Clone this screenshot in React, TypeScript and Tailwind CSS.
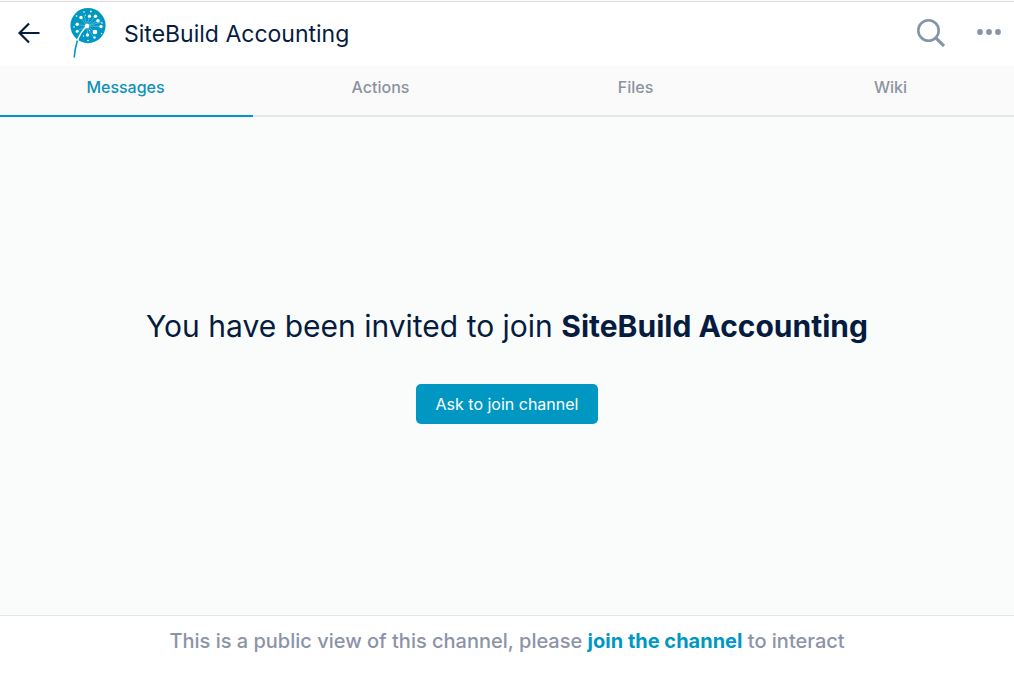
import { useState } from "react";

const tabs = ["Messages", "Actions", "Files", "Wiki"];

function DandelionLogo() {
  return (
    <svg viewBox="0 0 36 50" className="h-[50px] w-9 shrink-0" role="img" aria-label="SiteBuild">
      <circle cx="18" cy="17.6" r="17.6" fill="#0098c3" />
      <path
        d="M17 18L11 9.500M17 18L19.500 8M17 18L25.500 8M17 18L28 12.500M17 18L31 18.500M17 18L25 24M17 18L17.500 27M17 18L7 23M17 18L7 16.500M17 18L14 7M17 18L32 14M17 18L24 30"
        stroke="#8fd0e4"
        strokeWidth=".5"
      />
      <path d="M17 18C12 22.500 8.300 29 6.600 35" fill="none" stroke="#fff" strokeWidth="1.500" />
      <path d="M7.400 32.500C5.700 38 4.600 43 4.200 49.500" fill="none" stroke="#0098c3" strokeWidth="1.600" />
      <g fill="#fff">
        <circle cx="17" cy="18" r="2.300" />
        <circle cx="11" cy="9.500" r="1.700" />
        <circle cx="19.500" cy="8.200" r="1.600" />
        <circle cx="25.500" cy="8.200" r="1.700" />
        <circle cx="28" cy="12.800" r="1.800" />
        <circle cx="31" cy="18.500" r="1.700" />
        <circle cx="25" cy="24" r="2.300" />
        <circle cx="17.500" cy="27" r="1.700" />
        <circle cx="7.200" cy="23.200" r="1.500" />
        <circle cx="7.200" cy="16.300" r="1.700" />
        <circle cx="24.500" cy="29.500" r="1.200" />
        <circle cx="6.500" cy="8" r=".8" />
        <circle cx="14" cy="4" r=".8" />
        <circle cx="20.800" cy="3.500" r=".9" />
        <circle cx="15.500" cy="7" r=".6" />
        <circle cx="4" cy="19" r=".8" />
        <circle cx="32" cy="15" r=".8" />
        <circle cx="31.500" cy="25.500" r=".8" />
        <circle cx="19.500" cy="22.500" r=".6" />
        <circle cx="13.500" cy="28" r=".7" />
        <circle cx="18" cy="32.500" r=".8" />
      </g>
    </svg>
  );
}

export default function App() {
  const [active, setActive] = useState("Messages");

  return (
    <div className="flex min-h-screen flex-col overflow-hidden bg-[#fafafa] pt-px font-['Inter',sans-serif] text-[#061c3f]">
      <header className="flex h-[65px] items-center border-t border-[#dedede] bg-white pr-[13px] pb-0.5 pl-[18px]">
        <button type="button" aria-label="Back" className="shrink-0">
          <svg viewBox="0 0 22 22" className="size-[22px]" fill="none" stroke="currentColor" strokeWidth="2.200">
            <path d="M21.500 11H1.500M11 1.500L1.500 11L11 20.500" />
          </svg>
        </button>
        <div className="ml-[30px] flex min-w-0 flex-1 items-center gap-[18px]">
          <DandelionLogo />
          <h1 className="truncate pt-0.5 text-[23px] leading-8">SiteBuild Accounting</h1>
        </div>
        <div className="flex shrink-0 items-center gap-8 text-[#8694aa]">
          <button type="button" aria-label="Search">
            <svg viewBox="0 0 28 28" className="size-7" fill="none" stroke="currentColor">
              <circle cx="11.500" cy="11.500" r="10.200" strokeWidth="2.600" />
              <path d="M18.800 18.800L27 27" strokeWidth="3.200" />
            </svg>
          </button>
          <button type="button" aria-label="More options" className="pb-0.5">
            <svg viewBox="0 0 24 6" className="h-1.5 w-6" fill="currentColor">
              <circle cx="3" cy="3" r="2.900" />
              <circle cx="12" cy="3" r="2.900" />
              <circle cx="21" cy="3" r="2.900" />
            </svg>
          </button>
        </div>
      </header>

      <nav className="-mr-1 grid grid-cols-4 gap-0.5 border-b-2 border-[#e5e5e5] bg-[#fafafa]">
        {tabs.map((tab) => (
          <button
            key={tab}
            type="button"
            onClick={() => setActive(tab)}
            aria-current={tab === active ? "page" : undefined}
            className={
              tab === active
                ? "-mb-0.5 h-[51px] border-b-2 border-[#0098c3] pr-0.5 pb-2 text-base font-medium text-[#0f92b8]"
                : "-mb-0.5 h-[51px] border-b-2 border-transparent pr-0.5 pb-2 text-base font-medium text-[#8c93a0]"
            }
          >
            {tab}
          </button>
        ))}
      </nav>

      <main className="flex flex-1 flex-col items-center justify-center gap-10 bg-[#fafcfb] px-4 text-center">
        <h2 className="text-3xl">
          You have been invited to join <strong className="font-bold">SiteBuild Accounting</strong>
        </h2>
        <button type="button" className="h-10 rounded-[5px] bg-[#0098c3] px-5 text-base text-white">
          Ask to join channel
        </button>
      </main>

      <footer className="flex h-[68px] justify-center border-t border-[#e2e6e5] bg-white px-4 pt-[11px] text-center text-xl font-medium text-[#8c93a8]">
        <p>
          This is a public view of this channel, please{" "}
          <a href="#join" className="font-bold text-[#0098c3]">
            join the channel
          </a>{" "}
          to interact
        </p>
      </footer>
    </div>
  );
}
